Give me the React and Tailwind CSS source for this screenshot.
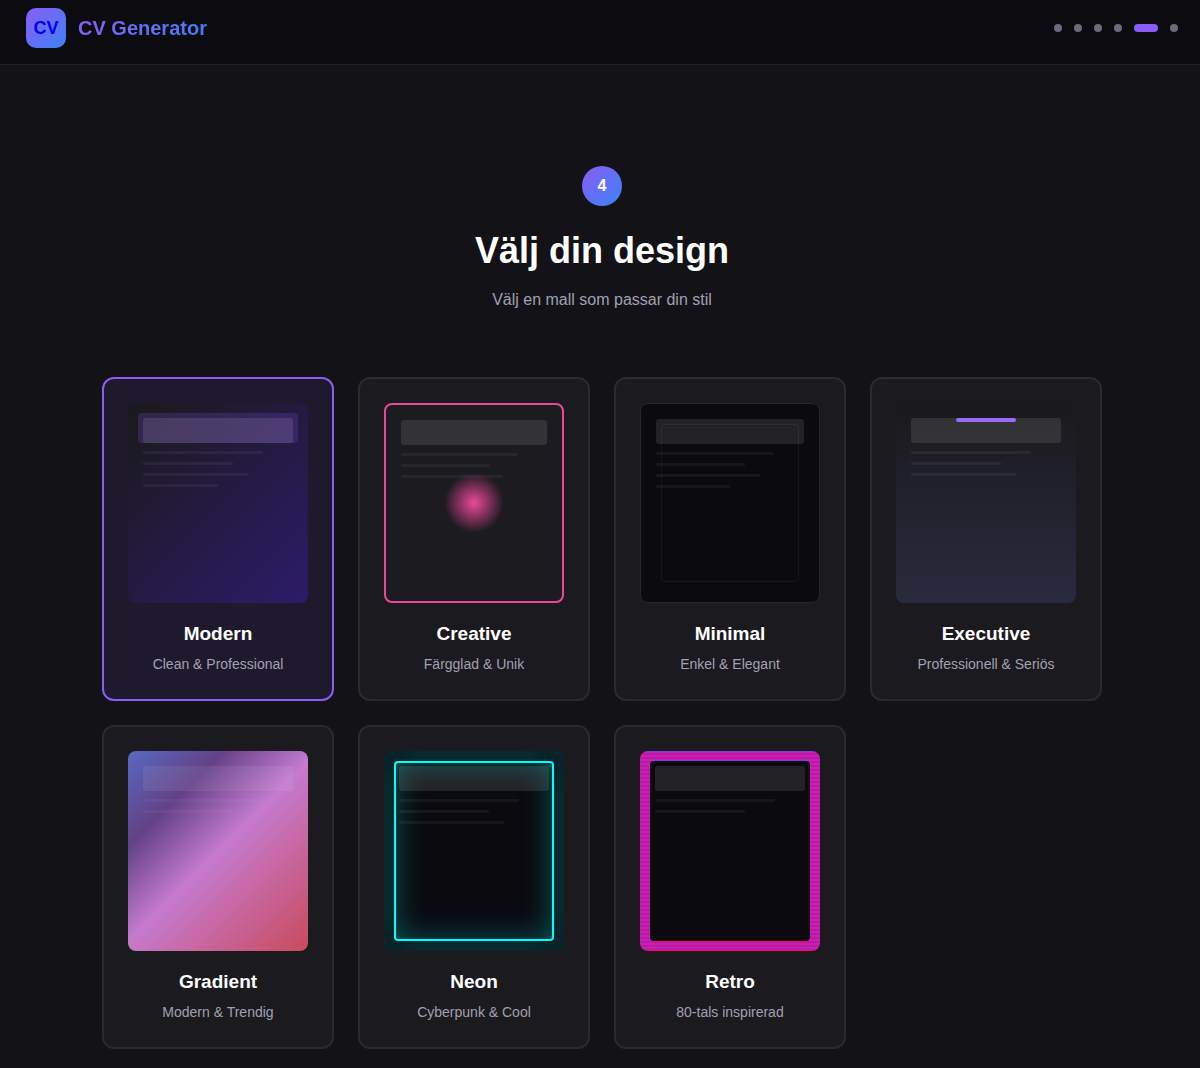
import React, { useState } from "react";

const STEPS = 6;
const ACTIVE_STEP = 4;

const LINE_WIDTHS = ["w-[80%]", "w-[60%]", "w-[70%]", "w-[50%]"];

const TEMPLATES = [
  {
    id: "modern",
    name: "Modern",
    tagline: "Clean & Professional",
    lines: 4,
    frame: "bg-[linear-gradient(135deg,#1a1a1a_0%,#2d1b69_100%)]",
    accent: "inset-x-[10px] top-[10px] h-[30px] rounded bg-[#8b5cf6]/20",
  },
  {
    id: "creative",
    name: "Creative",
    tagline: "Färgglad & Unik",
    lines: 3,
    frame: "border-2 border-[#ec4899] bg-[#1c1b20]",
    accent:
      "inset-0 m-auto size-[60px] rounded-full bg-[radial-gradient(circle,#ec4899_0%,transparent_70%)]",
  },
  {
    id: "minimal",
    name: "Minimal",
    tagline: "Enkel & Elegant",
    lines: 4,
    frame: "border border-[#27272b] bg-[#0a0a0f]",
    accent: "inset-5 rounded border border-white/5",
  },
  {
    id: "executive",
    name: "Executive",
    tagline: "Professionell & Seriös",
    lines: 3,
    frame: "bg-[linear-gradient(180deg,#1a1a1c_0%,#2a2a3e_100%)]",
    accent: "inset-x-[60px] top-[15px] h-1 rounded-xs bg-[#8b5cf6]",
  },
  {
    id: "gradient",
    name: "Gradient",
    tagline: "Modern & Trendig",
    lines: 2,
    frame:
      "opacity-80 bg-[linear-gradient(135deg,#667eea_0%,#764ba2_25%,#f093fb_50%,#f5576c_100%)]",
    accent: "hidden",
  },
  {
    id: "neon",
    name: "Neon",
    tagline: "Cyberpunk & Cool",
    lines: 3,
    frame: "bg-[#0a0a0f] shadow-[inset_0_0_20px_rgba(0,255,255,0.15)]",
    accent:
      "inset-[10px] rounded border-2 border-[#00ffff] shadow-[0_0_30px_rgba(0,255,255,0.25),inset_0_0_30px_rgba(0,255,255,0.3)]",
  },
  {
    id: "retro",
    name: "Retro",
    tagline: "80-tals inspirerad",
    lines: 2,
    frame:
      "bg-[repeating-linear-gradient(0deg,#ff006e_0px,#ff006e_2px,#8338ec_2px,#8338ec_4px)]",
    accent: "inset-[10px] rounded bg-[#0a0a0f]",
  },
];

function Preview({ template }) {
  return (
    <div
      aria-hidden="true"
      className={`relative h-[200px] overflow-hidden rounded-lg p-[15px] ${template.frame}`}
    >
      <div className={`absolute ${template.accent}`} />
      <div className="relative flex flex-col gap-2">
        <div className="h-[25px] rounded-[3px] bg-white/10" />
        {LINE_WIDTHS.slice(0, template.lines).map((width) => (
          <div key={width} className={`h-[3px] rounded-[1px] bg-white/5 ${width}`} />
        ))}
      </div>
    </div>
  );
}

function TemplateCard({ template, selected, onSelect }) {
  return (
    <button
      type="button"
      aria-pressed={selected}
      onClick={onSelect}
      className={`cursor-pointer rounded-xl border-2 p-6 text-center ${
        selected ? "border-[#8b5cf6] bg-[#1f192d]" : "border-[#2a2a2f] bg-[#1b1a1f]"
      }`}
    >
      <Preview template={template} />
      <h3 className="mt-4 text-[19px] leading-[30px] font-bold text-white">{template.name}</h3>
      <p className="mt-1 text-sm leading-[22px] text-[#a1a1b0]">{template.tagline}</p>
    </button>
  );
}

export default function App() {
  const [selected, setSelected] = useState("modern");

  return (
    <div className="min-h-screen bg-[#131217] font-['Liberation_Sans',Arial,sans-serif] text-white">
      <header className="flex items-center justify-between border-b border-[#1f1f24] bg-[#0c0b10] pt-2 pr-[22px] pb-4 pl-[26px]">
        <a href="#" className="flex items-center gap-3">
          <span className="flex size-10 items-center justify-center rounded-[10px] bg-[linear-gradient(135deg,#8b5cf6,#3b82f6)] text-lg font-bold text-[#0000ee]">
            CV
          </span>
          <span className="bg-[linear-gradient(135deg,#8b5cf6,#3b82f6)] bg-clip-text text-xl font-bold text-transparent">
            CV Generator
          </span>
        </a>
        <nav aria-label="Steg" className="flex items-center gap-3">
          {Array.from({ length: STEPS }, (_, i) => (
            <button
              key={i}
              type="button"
              aria-label={`Steg ${i + 1}`}
              aria-current={i === ACTIVE_STEP ? "step" : undefined}
              className={`h-2 rounded-full ${
                i === ACTIVE_STEP ? "w-6 bg-[#8b5cf6]" : "w-2 bg-[#6b6b7b]"
              }`}
            />
          ))}
        </nav>
      </header>

      <main className="pt-[101px] pb-4 pl-1">
        <div className="mx-auto max-w-[1000px]">
          <div className="flex flex-col items-center text-center">
            <span className="flex size-10 items-center justify-center rounded-full bg-[linear-gradient(135deg,#8b5cf6,#3b82f6)] text-base font-bold">
              4
            </span>
            <h1 className="mt-6 text-4xl leading-[42px] font-bold">Välj din design</h1>
            <p className="mt-4 text-base leading-6 text-[#a1a1b0]">Välj en mall som passar din stil</p>
          </div>
          <div className="mt-[65px] grid grid-cols-[repeat(auto-fill,minmax(220px,1fr))] gap-6">
            {TEMPLATES.map((template) => (
              <TemplateCard
                key={template.id}
                template={template}
                selected={selected === template.id}
                onSelect={() => setSelected(template.id)}
              />
            ))}
          </div>
        </div>
      </main>
    </div>
  );
}
